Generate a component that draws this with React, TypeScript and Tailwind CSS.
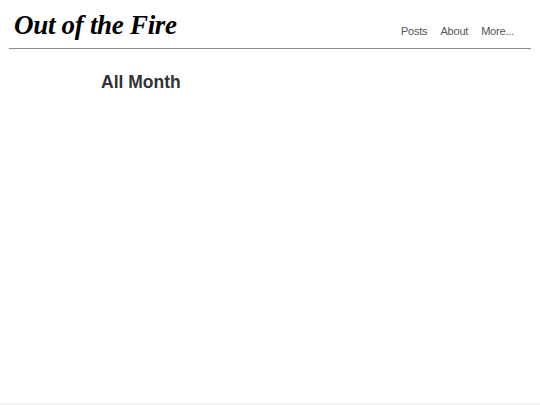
export default function App() {
  return (
    <div className="w-[540px] h-[405px] bg-white flex flex-col overflow-hidden" style={{ fontFamily: '"Liberation Sans", Arial, sans-serif' }}>
      <header className="mx-[9px] h-[49px] border-b border-[#8a8a8a] flex items-end justify-between">
        <div className="pl-[5px] pb-[8px] text-[27px] leading-[30px] font-bold italic text-black tracking-[-0.3px]" style={{ fontFamily: '"Liberation Serif", "Times New Roman", serif' }}>
          Out of the Fire
        </div>
        <nav className="flex gap-[13px] pr-[17px] pb-[10px] text-[11px] leading-[14px] text-[#555] tracking-[-0.2px]">
          <span>Posts</span>
          <span>About</span>
          <span>More...</span>
        </nav>
      </header>
      <main className="flex-1 pl-[101px] pt-[22px]">
        <h1 className="text-[17.5px] leading-[22px] font-bold text-[#333]">All Month</h1>
      </main>
      <div className="h-[2px] bg-[#f3f3f3]" />
    </div>
  );
}
